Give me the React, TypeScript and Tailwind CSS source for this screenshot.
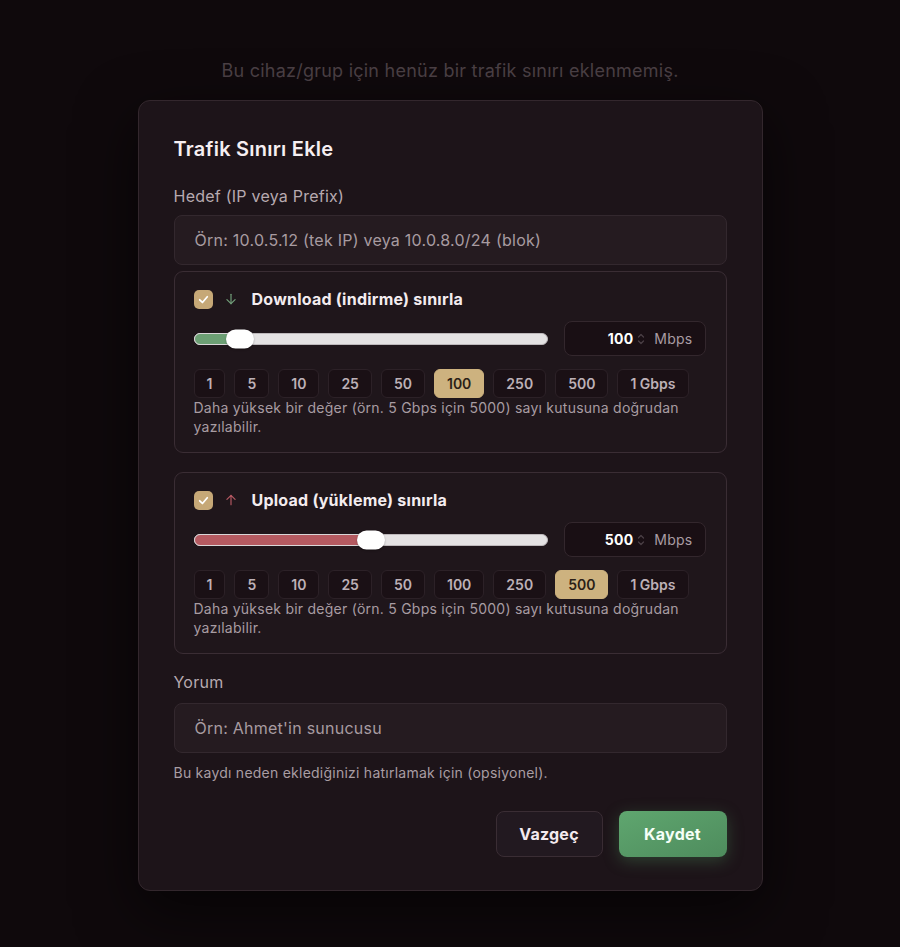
import React from "react";

const PRESETS = ["1", "5", "10", "25", "50", "100", "250", "500", "1 Gbps"];

function Spinner() {
  return (
    <svg width="8" height="14" viewBox="0 0 8 14" className="ml-[4px]">
      <path d="M1.5 5 L4 2.5 L6.5 5" fill="none" stroke="#4a3f45" strokeWidth="1.3" strokeLinecap="round" strokeLinejoin="round" />
      <path d="M1.5 9 L4 11.5 L6.5 9" fill="none" stroke="#4a3f45" strokeWidth="1.3" strokeLinecap="round" strokeLinejoin="round" />
    </svg>
  );
}

function Check() {
  return (
    <div className="w-[19px] h-[19px] rounded-[5px] bg-[#c6a877] flex items-center justify-center">
      <svg width="13" height="13" viewBox="0 0 24 24" fill="none" stroke="#ffffff" strokeWidth="3.2" strokeLinecap="round" strokeLinejoin="round">
        <path d="M5 12.5 L10 17.5 L19 7" />
      </svg>
    </div>
  );
}

function LimitCard({
  title,
  dir,
  value,
  pct,
  fill,
}: {
  title: string;
  dir: "down" | "up";
  value: string;
  pct: number;
  fill: string;
}) {
  return (
    <div className="h-[182px] rounded-[9px] border border-[#3a2d34] bg-[#1f161b] pl-[19px] pr-5 pt-[17px]">
      <div className="flex items-center h-[20px]">
        <Check />
        <div className="ml-[11px] w-[14px] flex justify-center">
          {dir === "down" ? (
            <svg width="14" height="14" viewBox="0 0 24 24" fill="none" stroke="#73a07b" strokeWidth="2" strokeLinecap="round" strokeLinejoin="round">
              <path d="M12 4v16" />
              <path d="M5 13l7 7 7-7" />
            </svg>
          ) : (
            <svg width="14" height="14" viewBox="0 0 24 24" fill="none" stroke="#b55862" strokeWidth="2" strokeLinecap="round" strokeLinejoin="round">
              <path d="M12 20V4" />
              <path d="M5 11l7-7 7 7" />
            </svg>
          )}
        </div>
        <span className="ml-[14px] text-[16px] font-bold text-[#f3ecef]">{title}</span>
      </div>
      <div className="flex items-center mt-[12px] gap-4">
        <div className="relative flex-1 h-[12px]">
          <div className="absolute inset-0 rounded-full bg-[#e4e2e3] border border-[#bdb8bb]" />
          <div
            className="absolute left-0 top-0 bottom-0 rounded-l-full border border-[#d9d6d8]"
            style={{ width: `${pct}%`, background: fill }}
          />
          <div
            className="absolute top-1/2 w-[28px] h-[19px] -translate-x-1/2 -translate-y-1/2 rounded-full bg-white shadow-[0_1px_2px_rgba(0,0,0,0.3)]"
            style={{ left: `${pct}%` }}
          />
        </div>
        <div className="w-[142px] h-[35px] rounded-[8px] border border-[#33272d] bg-[#190f14] flex items-center justify-end pr-[12px]">
          <span className="text-[14px] font-bold text-[#ffffff]">{value}</span>
          <Spinner />
          <span className="ml-[9px] text-[14px] text-[#a99ca3]">Mbps</span>
        </div>
      </div>
      <div className="flex mt-[13px] gap-[9px]">
        {PRESETS.map((p) => {
          const sel = p === value;
          return (
            <div
              key={p}
              className={
                sel
                  ? "h-[29px] px-3 rounded-[6px] bg-[#cdb27f] border border-[#cdb27f] text-[#2b1f17] text-[14px] font-semibold tracking-normal flex items-center justify-center"
                  : "h-[29px] px-3 rounded-[6px] bg-[#1a1015] border border-[#2c2127] text-[#bdb1b7] text-[14px] font-semibold tracking-normal flex items-center justify-center"
              }
            >
              {p}
            </div>
          );
        })}
      </div>
      <p className="text-[14px] leading-[19px] text-[#a89ca2] pr-6">
        Daha yüksek bir değer (örn. 5 Gbps için 5000) sayı kutusuna doğrudan yazılabilir.
      </p>
    </div>
  );
}

export default function App() {
  return (
    <div
      className="min-h-[947px] w-full bg-[#0f090c] pt-[59px] flex flex-col items-center tracking-[0.015em]"
      style={{ fontFamily: "Inter, 'Noto Sans', sans-serif" }}
    >
      <p className="text-[18px] leading-[24px] text-[#4b4045]">
        Bu cihaz/grup için henüz bir trafik sınırı eklenmemiş.
      </p>
      <div className="mt-[17px] w-[625px] rounded-[12px] border border-[#33272d] bg-[#1d1419] px-[35px] pt-[34px] pb-[33px] shadow-[0_20px_60px_rgba(0,0,0,0.6)]">
        <h2 className="text-[20px] leading-[28px] font-semibold text-[#f6eff2]">Trafik Sınırı Ekle</h2>
        <label className="block mt-[21px] text-[16px] leading-[24px] text-[#b7aab0]">Hedef (IP veya Prefix)</label>
        <div className="mt-[7px] h-[50px] rounded-[8px] border border-[#33282e] bg-[#251b20] flex items-center px-[20px] text-[16px] text-[#a89ba1]">
          Örn: 10.0.5.12 (tek IP) veya 10.0.8.0/24 (blok)
        </div>
        <div className="mt-[6px]">
          <LimitCard title="Download (indirme) sınırla" dir="down" value="100" pct={13} fill="#6c9f74" />
        </div>
        <div className="mt-[19px]">
          <LimitCard title="Upload (yükleme) sınırla" dir="up" value="500" pct={50} fill="#b45a61" />
        </div>
        <label className="block mt-[16px] text-[16px] leading-[24px] text-[#b7aab0]">Yorum</label>
        <div className="mt-[9px] h-[50px] rounded-[8px] border border-[#33282e] bg-[#251b20] flex items-center px-[20px] text-[16px] text-[#a89ba1]">
          Örn: Ahmet'in sunucusu
        </div>
        <p className="mt-[10px] text-[14px] leading-[20px] text-[#a99da3]">
          Bu kaydı neden eklediğinizi hatırlamak için (opsiyonel).
        </p>
        <div className="mt-[28px] flex justify-end gap-4">
          <button className="w-[107px] h-[46px] rounded-[8px] border border-[#3a2d34] bg-[#221920] text-[16px] font-bold text-[#f3eaee]">
            Vazgeç
          </button>
          <button className="w-[108px] h-[46px] rounded-[8px] bg-gradient-to-br from-[#5fa66f] to-[#4e8c5d] text-[16px] font-bold text-[#f5fff7] shadow-[0_4px_16px_rgba(80,150,95,0.35)]">
            Kaydet
          </button>
        </div>
      </div>
    </div>
  );
}
